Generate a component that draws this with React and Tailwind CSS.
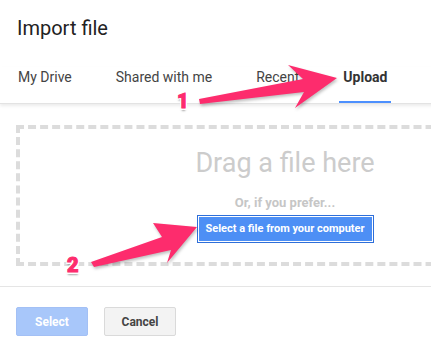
export default function App() {
  const tabs = [
    { label: "My Drive" },
    { label: "Shared with me" },
    { label: "Recent" },
    { label: "Upload", active: true },
  ];
  return (
    <div className="relative w-[431px] h-[346px] overflow-hidden bg-white font-['Roboto',sans-serif]">
      <div className="w-[574px]">
        <div className="pt-4 pl-[17px] text-[20px] leading-6 text-[#222]">Import file</div>
        <div className="mt-[27px] border-b border-[#e3e3e3] shadow-[0_2px_3px_rgba(0,0,0,0.08)]">
          <div className="flex gap-[36px] pl-[14px]">
            {tabs.map((t) => (
              <div
                key={t.label}
                className={
                  t.active
                    ? "px-1 pb-[14px] border-b-2 border-[#4d90fe] text-[14px] leading-5 font-bold text-[#333]"
                    : "px-1 pb-4 text-[14px] leading-5 text-[#444]"
                }
              >
                {t.label}
              </div>
            ))}
          </div>
        </div>
        <div className="ml-4 mt-[21px] w-[538px] border-4 border-dashed border-[#dcdcdc] pt-[18px] pb-[19px] flex flex-col items-center">
          <div className="text-[27px] leading-8 text-[#cccccc]">Drag a file here</div>
          <div className="mt-4 text-[13px] leading-4 font-bold text-[#c6c6c6]">Or, if you prefer...</div>
          <div className="mt-1 h-[28px] w-[177px] flex items-center justify-center border border-[#2f6fd9] bg-[#4d8ff5] shadow-[inset_0_0_0_1px_#ffffff] text-white text-[11px] font-bold">
            Select a file from your computer
          </div>
        </div>
        <div className="mt-5 h-px bg-[#e5e5e5]" />
        <div className="mt-5 pl-4 flex gap-4">
          <div className="w-[72px] h-[29px] flex items-center justify-center rounded-[2px] border border-[#a3c0f5] bg-[#a8c7fa] text-white text-[12px] font-bold">
            Select
          </div>
          <div className="w-[72px] h-[29px] flex items-center justify-center rounded-[2px] border border-[#dadada] bg-[#f3f3f3] text-[#444] text-[12px] font-bold">
            Cancel
          </div>
        </div>
      </div>

      <svg className="absolute left-0 top-0 [filter:drop-shadow(1px_2px_1.5px_rgba(0,0,0,0.25))]" width="431" height="346">
        <polygon points="199,99 303,79 288,65 337,78 295,108 304,92 200,104" fill="#fd2c6d" />
        <polygon points="91,262 162,237 153,223 197,227 167,263 171,250 94,267" fill="#fd2c6d" />
      </svg>
      <span className="absolute left-[177px] top-[89px] text-[20px] leading-6 font-black text-[#fd2c6d] [-webkit-text-stroke:1px_#fd2c6d] [text-shadow:-1.5px_-1.5px_0_#fff,1.5px_-1.5px_0_#fff,-1.5px_1.5px_0_#fff,1.5px_1.5px_0_#fff,0_2.5px_2px_rgba(0,0,0,0.35)]">
        1
      </span>
      <span className="absolute left-[67px] top-[253px] text-[20px] leading-6 font-black text-[#fd2c6d] [-webkit-text-stroke:1px_#fd2c6d] [text-shadow:-1.5px_-1.5px_0_#fff,1.5px_-1.5px_0_#fff,-1.5px_1.5px_0_#fff,1.5px_1.5px_0_#fff,0_2.5px_2px_rgba(0,0,0,0.35)]">
        2
      </span>
    </div>
  );
}
